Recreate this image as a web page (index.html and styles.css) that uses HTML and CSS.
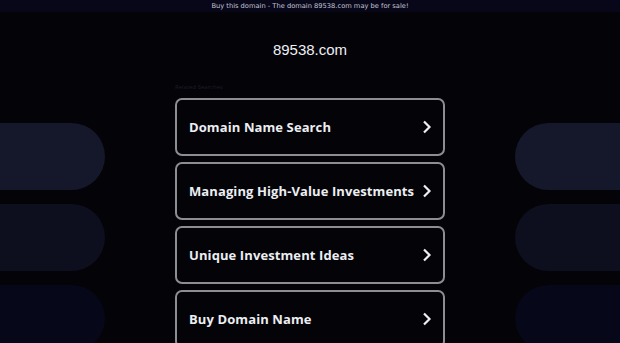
FILE: index.html
```html
<!DOCTYPE html>
<html lang="en">
    <head>
        <meta charset="utf-8">
        <meta name="viewport" content="width=device-width,initial-scale=1" />
        <title>89538.com</title>
        <link rel="stylesheet" href="styles.css">
    </head>
    <body>
        <div class="topbar">Buy this domain - The domain 89538.com may be for sale!</div>
        <div class="pills left">
            <div class="pill p1"></div>
            <div class="pill p2"></div>
            <div class="pill p3"></div>
        </div>
        <div class="pills right">
            <div class="pill p1"></div>
            <div class="pill p2"></div>
            <div class="pill p3"></div>
        </div>
        <div class="main">
            <h1 class="domain">89538.com</h1>
            <div class="related">Related Searches</div>
            <a class="card" href="#"><span>Domain Name Search</span><svg class="chev" viewBox="0 0 10 14"><path d="M2 1.5 L7.5 7 L2 12.5"/></svg></a>
            <a class="card" href="#"><span>Managing High-Value Investments</span><svg class="chev" viewBox="0 0 10 14"><path d="M2 1.5 L7.5 7 L2 12.5"/></svg></a>
            <a class="card" href="#"><span>Unique Investment Ideas</span><svg class="chev" viewBox="0 0 10 14"><path d="M2 1.5 L7.5 7 L2 12.5"/></svg></a>
            <a class="card" href="#"><span>Buy Domain Name</span><svg class="chev" viewBox="0 0 10 14"><path d="M2 1.5 L7.5 7 L2 12.5"/></svg></a>
        </div>
    </body>
</html>
```
FILE: styles.css
```css
html, body{
    margin: 0;
    height: 100%;
    overflow: hidden;
}
body{
    background: #040308;
    font-family: "Open Sans", "DejaVu Sans", sans-serif;
    position: relative;
}
.topbar{
    height: 12px;
    line-height: 12px;
    background: #070719;
    color: #c4c4d2;
    font-family: "DejaVu Sans", sans-serif;
    font-size: 6.7px;
    text-align: center;
}
.pills{
    position: absolute;
    top: 123px;
    display: flex;
    flex-direction: column;
    gap: 14px;
}
.pills.left{ left: 0; }
.pills.right{ right: 0; }
.pill{
    width: 105px;
    height: 67px;
}
.pills.left .pill{ border-radius: 0 34px 34px 0; }
.pills.right .pill{ border-radius: 34px 0 0 34px; }
.p1{ background: #15182b; }
.p2{ background: #0d0f1f; }
.p3{ background: #060718; }

.main{
    position: relative;
    width: 270px;
    margin: 0 auto;
    padding-top: 28px;
}
.domain{
    margin: 0;
    text-align: center;
    color: #eef0f4;
    font-family: "Liberation Sans", Arial, sans-serif;
    font-weight: normal;
    font-size: 15px;
    line-height: 20px;
}
.related{
    margin-top: 21px;
    height: 17px;
    color: #1c1c2e;
    font-size: 6px;
    line-height: 12px;
}
.card{
    display: flex;
    align-items: center;
    justify-content: space-between;
    box-sizing: border-box;
    height: 58px;
    margin-bottom: 6px;
    padding: 0 11px 0 12px;
    border: 2px solid #8d8e94;
    border-radius: 7px;
    background: #040308;
    color: #eceef2;
    font-weight: bold;
    font-size: 13px;
    letter-spacing: 0.1px;
    text-decoration: none;
}
.chev{
    width: 10px;
    height: 14px;
    fill: none;
    stroke: #eceef2;
    stroke-width: 2.2;
}
```
